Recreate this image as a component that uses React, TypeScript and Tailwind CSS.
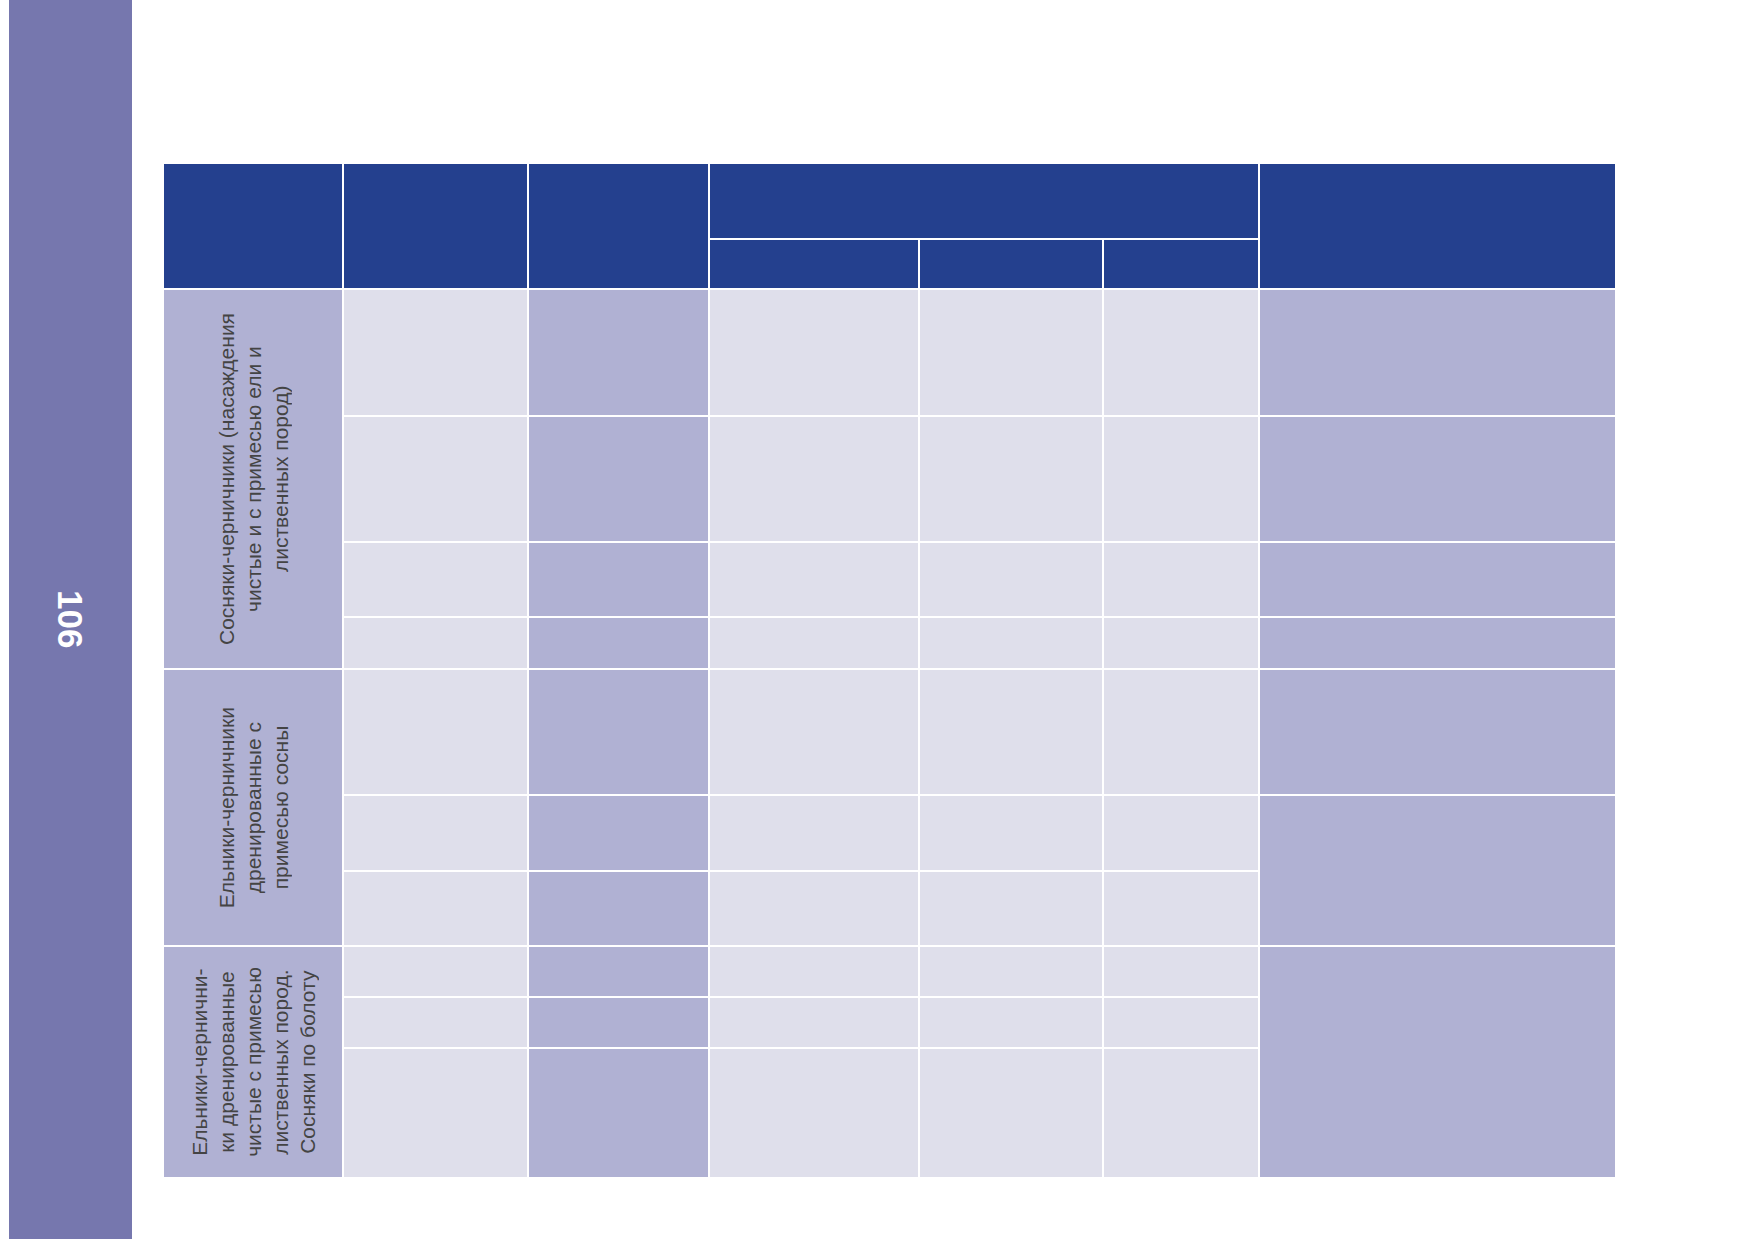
const Cell = ({ tone, className = "" }: { tone: "light" | "mid"; className?: string }) => (
  <div className={`${tone === "light" ? "bg-[#dfdfeb]" : "bg-[#b0b1d3]"} ${className}`}></div>
);

const Label = ({ lines, className = "" }: { lines: string[]; className?: string }) => (
  <div className={`bg-[#b0b1d3] flex items-center justify-center ${className}`}>
    <span className="[writing-mode:vertical-rl] rotate-180 text-center text-[21px] leading-[27px] text-[#444444]">
      {lines.map((l, i) => (
        <span key={i} className="block">
          {l}
        </span>
      ))}
    </span>
  </div>
);

// body row: cols 1..5 (light / mid / light / light / light)
const Middle = () => (
  <>
    <Cell tone="light" />
    <Cell tone="mid" />
    <Cell tone="light" />
    <Cell tone="light" />
    <Cell tone="light" />
  </>
);

export default function App() {
  return (
    <div className="flex h-[1239px] w-[1754px] bg-white font-['Liberation_Sans',Arial,sans-serif]">
      <div className="ml-[9px] w-[123px] h-full bg-[#7677ae] flex items-center justify-center">
        <span className="[writing-mode:vertical-rl] text-[35px] font-bold leading-none text-white">106</span>
      </div>

      <div
        className="ml-[32px] mt-[164px] grid h-[1013px] gap-[2px] grid-cols-[178px_183px_179px_208px_182px_154px_355px] grid-rows-[74px_48px_125px_124px_73px_50px_124px_74px_73px_49px_49px_128px]"
      >
        {/* header */}
        <div className="row-span-2 bg-[#24408e]"></div>
        <div className="row-span-2 bg-[#24408e]"></div>
        <div className="row-span-2 bg-[#24408e]"></div>
        <div className="col-span-3 bg-[#24408e]"></div>
        <div className="row-span-2 bg-[#24408e]"></div>
        <div className="bg-[#24408e]"></div>
        <div className="bg-[#24408e]"></div>
        <div className="bg-[#24408e]"></div>

        {/* group 1 */}
        <Label
          className="row-span-4"
          lines={["Сосняки-черничники (насаждения", "чистые и с примесью ели и", "лиственных пород)"]}
        />
        <Middle />
        <Cell tone="mid" />
        <Middle />
        <Cell tone="mid" />
        <Middle />
        <Cell tone="mid" />
        <Middle />
        <Cell tone="mid" />

        {/* group 2 */}
        <Label className="row-span-3" lines={["Ельники-черничники", "дренированные с", "примесью сосны"]} />
        <Middle />
        <Cell tone="mid" />
        <Middle />
        <Cell tone="mid" className="row-span-2" />
        <Middle />

        {/* group 3 */}
        <Label
          className="row-span-3"
          lines={["Ельники-чернични-", "ки дренированные", "чистые с примесью", "лиственных пород.", "Сосняки по болоту"]}
        />
        <Middle />
        <Cell tone="mid" className="row-span-3" />
        <Middle />
        <Middle />
      </div>
    </div>
  );
}
